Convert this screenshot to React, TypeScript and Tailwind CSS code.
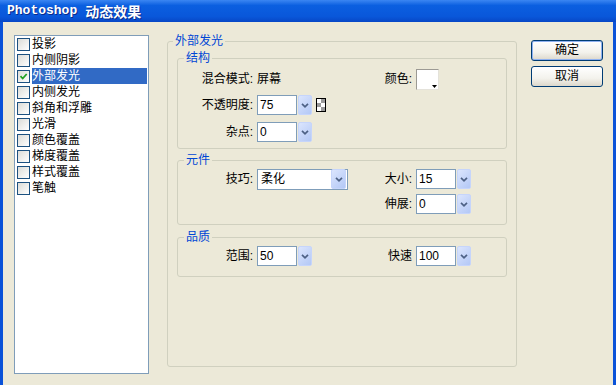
import React from 'react';

const effects = ['投影', '内侧阴影', '外部发光', '内侧发光', '斜角和浮雕', '光滑', '颜色覆盖', '梯度覆盖', '样式覆盖', '笔触'];

function Chevron() {
  return (
    <svg width="8" height="5" viewBox="0 0 8 5">
      <path d="M1 0.8l3 3 3-3" fill="none" stroke="#4d6185" strokeWidth="1.7" />
    </svg>
  );
}

function DropButton({ className = '' }: { className?: string }) {
  return (
    <div className={`flex h-[20px] w-[14px] items-center justify-center rounded-[2px] border border-[#c6d5fb] bg-[linear-gradient(135deg,#dbe5fd,#b3c8f6)] ${className}`}>
      <Chevron />
    </div>
  );
}

function NumberBox({ value }: { value: string }) {
  return (
    <div className="flex items-center">
      <div className="h-[20px] w-[40px] border border-[#7f9db9] bg-white pl-[2px] leading-[18px]">{value}</div>
      <DropButton className="ml-[1px]" />
    </div>
  );
}

function LField({ label, children }: { label: string; children: React.ReactNode }) {
  return (
    <>
      <span className="w-[75px] text-right leading-[20px]">{label}</span>
      <div className="ml-[4px] flex items-center">{children}</div>
    </>
  );
}

function RField({ label, children }: { label: string; children: React.ReactNode }) {
  return (
    <>
      <span className="w-[52px] text-right leading-[20px]">{label}</span>
      <div className="ml-[4px] flex items-center">{children}</div>
    </>
  );
}

function Row({ left, right, className = '' }: { left?: React.ReactNode; right?: React.ReactNode; className?: string }) {
  return (
    <div className={`flex h-[20px] items-center ${className}`}>
      <div className="flex w-[182px] items-center">{left}</div>
      <div className="flex items-center">{right}</div>
    </div>
  );
}

function Group({ title, className = '', legendClass = 'ml-[6px]', children }: { title: string; className?: string; legendClass?: string; children: React.ReactNode }) {
  return (
    <fieldset className={`rounded-[3px] border border-[#d0d0bf] ${className}`}>
      <legend className={`px-[2px] leading-[16px] text-[#0046d5] ${legendClass}`}>{title}</legend>
      {children}
    </fieldset>
  );
}

function Checker() {
  return (
    <svg width="10" height="14" viewBox="0 0 10 14">
      <rect x="0.5" y="0.5" width="9" height="13" fill="#fff" stroke="#000" />
      <rect x="5" y="1" width="4" height="4" fill="#9a9a9a" />
      <rect x="1" y="5" width="4" height="4" fill="#9a9a9a" />
      <rect x="5" y="9" width="4" height="4" fill="#9a9a9a" />
    </svg>
  );
}

function CheckBox({ checked }: { checked: boolean }) {
  return (
    <div className="flex h-[13px] w-[13px] items-center justify-center border border-[#1c5180] bg-[linear-gradient(135deg,#dcdcd7,#ffffff)]">
      {checked && (
        <svg width="9" height="9" viewBox="0 0 9 9">
          <path d="M1.5 4.2l2.2 2.3 4-4.5" fill="none" stroke="#21a121" strokeWidth="1.8" />
        </svg>
      )}
    </div>
  );
}

export default function App() {
  return (
    <div className="flex h-[385px] w-[616px] flex-col overflow-hidden font-['Liberation_Sans','Noto_Sans_CJK_SC',sans-serif] text-[12px] text-black">
      {/* title bar */}
      <div className="flex h-[22px] items-center bg-[linear-gradient(#3b86f2_0%,#0b5fe0_25%,#0957da_75%,#0747c6_100%)] pl-[7px] font-bold text-white [text-shadow:1px_1px_#0a2a8a]">
        <span className="font-['Liberation_Mono',monospace] text-[13px]">Photoshop</span>
        <span className="ml-[8px] font-['Noto_Sans_CJK_SC',sans-serif] text-[14px]">动态效果</span>
      </div>

      <div className="flex flex-1 items-start border-x-[3px] border-[#0a52d8] bg-[#ece9d8] pl-[11px]">
        {/* effects list */}
        <div className="mt-[13px] h-[339px] w-[135px] border border-[#7f9db9] bg-white pl-[2px]">
          {effects.map((name, i) => (
            <div key={name} className="flex h-[16px] items-center">
              <CheckBox checked={i === 2} />
              <span className={`ml-[2px] mr-[1px] flex-1 leading-[16px] ${i === 2 ? 'bg-[#316ac5] text-white' : ''}`}>{name}</span>
            </div>
          ))}
        </div>

        {/* main group */}
        <Group title="外部发光" className="ml-[18px] mt-[11px] h-[334px] w-[350px]" legendClass="ml-[5px]">
          <div className="px-[9px]">
            <Group title="结构" className="mt-[1px] pb-[6px] pt-[3px]">
              <Row
                left={<LField label="混合模式:"><span className="leading-[20px]">屏幕</span></LField>}
                right={
                  <RField label="颜色:">
                    <div className="flex h-[21px] w-[23px] items-end justify-end border border-t-[#9c9a94] border-l-[#9c9a94] border-r-[#e4e2da] border-b-[#e4e2da] bg-white pb-[1px] pr-[1px]">
                      <svg width="5" height="3" viewBox="0 0 5 3">
                        <path d="M0 0h5L2.5 3z" fill="#000" />
                      </svg>
                    </div>
                  </RField>
                }
              />
              <Row
                className="mt-[6px]"
                left={
                  <LField label="不透明度:">
                    <NumberBox value="75" />
                    <div className="ml-[4px]">
                      <Checker />
                    </div>
                  </LField>
                }
              />
              <Row className="mt-[7px]" left={<LField label="杂点:"><NumberBox value="0" /></LField>} />
            </Group>

            <Group title="元件" className="mt-[3px] pb-[10px] pt-[1px]">
              <Row
                left={
                  <LField label="技巧:">
                    <div className="flex h-[21px] w-[91px] items-center justify-between border border-[#7f9db9] bg-white pl-[3px] pr-[1px]">
                      <span className="leading-[18px]">柔化</span>
                      <DropButton className="h-[17px] w-[15px]" />
                    </div>
                  </LField>
                }
                right={<RField label="大小:"><NumberBox value="15" /></RField>}
              />
              <Row className="mt-[5px]" right={<RField label="伸展:"><NumberBox value="0" /></RField>} />
            </Group>

            <Group title="品质" className="mt-[4px] pb-[10px] pt-[1px]">
              <Row
                left={<LField label="范围:"><NumberBox value="50" /></LField>}
                right={<RField label="快速"><NumberBox value="100" /></RField>}
              />
            </Group>
          </div>
        </Group>

        {/* buttons */}
        <div className="ml-[14px] mt-[18px] flex flex-col gap-[5px]">
          <button className="h-[21px] w-[72px] rounded-[3px] border border-[#003c74] bg-[linear-gradient(#ffffff,#f3f2ec_60%,#dcd7cb)] leading-[19px] shadow-[inset_0_0_0_1px_#8fb1f0]">确定</button>
          <button className="h-[21px] w-[72px] rounded-[3px] border border-[#003c74] bg-[linear-gradient(#ffffff,#f3f2ec_60%,#dcd7cb)] leading-[19px]">取消</button>
        </div>
      </div>
    </div>
  );
}
